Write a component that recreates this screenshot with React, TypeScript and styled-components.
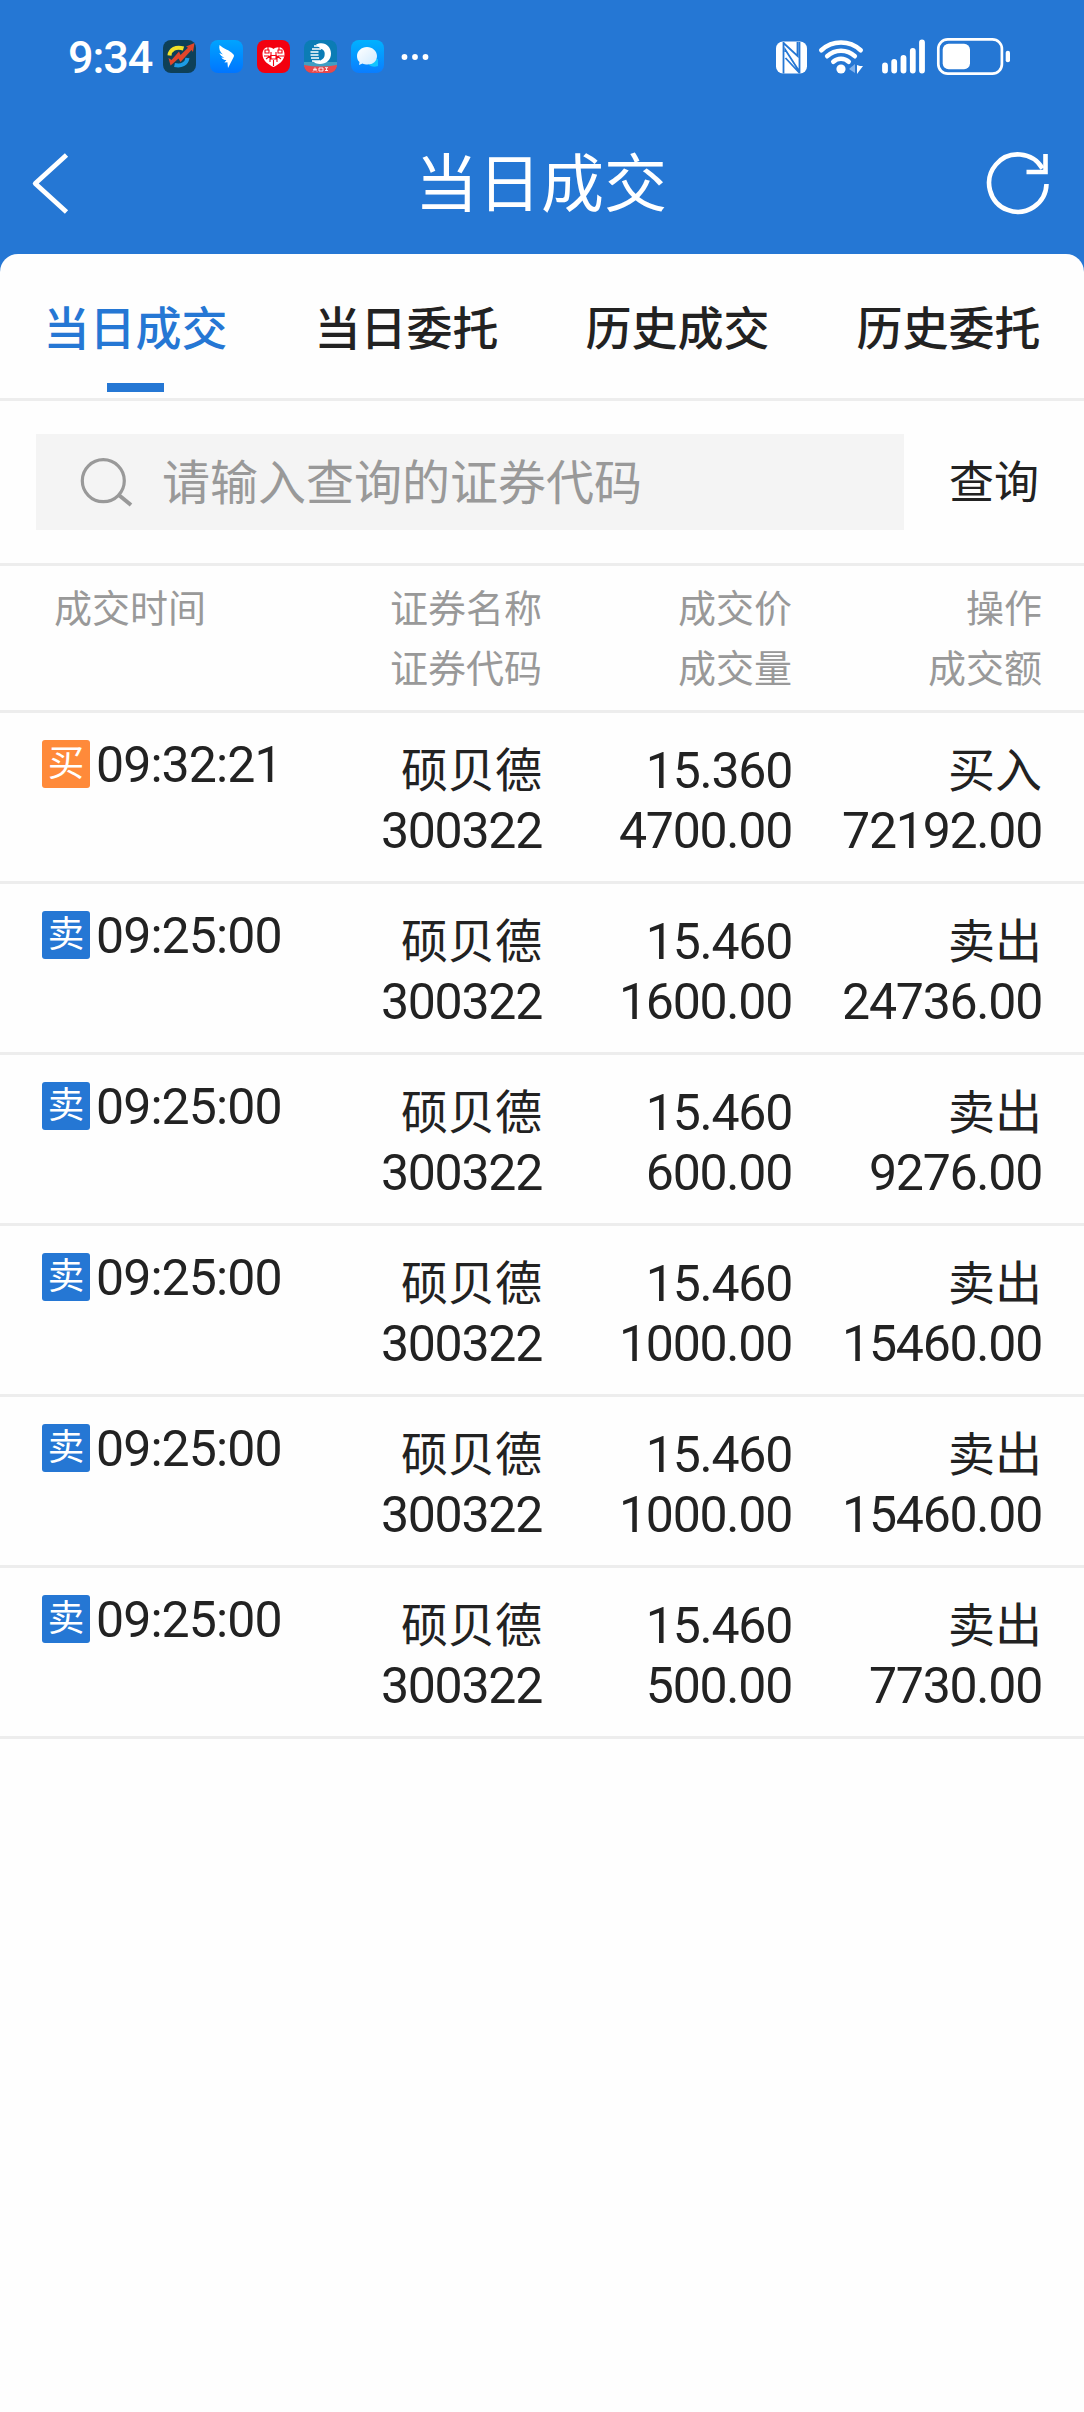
import React from "react";
import styled, { createGlobalStyle } from "styled-components";

const BLUE = "#2577d4";
const INK = "#222222";
const GRAY = "#999999";
const LINE = "#ededed";

const GlobalStyle = createGlobalStyle`
  * { box-sizing: border-box; }
  body {
    margin: 0;
    background: #fefefe;
    color: ${INK};
    font-family: Roboto, "Noto Sans CJK SC", sans-serif;
  }
  button, input { font: inherit; color: inherit; border: 0; background: none; padding: 0; margin: 0; }
  svg { display: block; flex: none; }
`;

const Screen = styled.div`
  width: 1084px;
  min-height: 2412px;
  display: flex;
  flex-direction: column;
  background: ${BLUE};
`;

const StatusBar = styled.div`
  height: 113px;
  padding: 0 73px 0 68px;
  display: flex;
  align-items: center;
  justify-content: space-between;
`;

const StatusGroup = styled.div`
  display: flex;
  align-items: center;
`;

const Clock = styled.span`
  width: 95px;
  padding-top: 2px;
  color: #fff;
  font-size: 45px;
  font-weight: 500;
  line-height: 60px;
  letter-spacing: -1.1px;
`;

const AppIcons = styled.div`
  display: flex;
  gap: 14px;
  margin-right: 17px;
`;

const NavBar = styled.header`
  height: 141px;
  padding: 0 33px 2px 31px;
  display: grid;
  grid-template-columns: 66px 1fr 66px;
  align-items: center;
`;

const NavButton = styled.button<{ $end?: boolean }>`
  display: flex;
  justify-content: ${(p) => (p.$end ? "flex-end" : "flex-start")};
`;

const Title = styled.h1`
  margin: 0;
  padding-top: 4px;
  color: #fff;
  font-size: 63px;
  font-weight: 400;
  line-height: 80px;
  text-align: center;
`;

const Sheet = styled.main`
  flex: 1;
  background: #fefefe;
  border-radius: 18px 18px 0 0;
`;

const Tabs = styled.nav`
  height: 147px;
  display: grid;
  grid-template-columns: repeat(4, 1fr);
  border-bottom: 3px solid ${LINE};
`;

const Tab = styled.button<{ $active?: boolean }>`
  display: flex;
  flex-direction: column;
  align-items: center;
  justify-content: space-between;
  padding: 40px 0 6px;
  font-size: 46px;
  font-weight: 500;
  line-height: 70px;
  color: ${(p) => (p.$active ? BLUE : INK)};
`;

const TabMark = styled.span`
  width: 57px;
  height: 9px;
  background: ${BLUE};
`;

const SearchBar = styled.div`
  height: 165px;
  padding-left: 36px;
  display: flex;
  align-items: center;
  border-bottom: 3px solid ${LINE};
`;

const SearchBox = styled.label`
  width: 868px;
  height: 96px;
  padding-left: 44px;
  display: flex;
  align-items: center;
  gap: 28px;
  background: #f4f4f4;
`;

const SearchInput = styled.input`
  flex: 1;
  height: 70px;
  padding-top: 2px;
  font-size: 48px;
  outline: none;
  &::placeholder { color: ${GRAY}; opacity: 1; }
`;

const SearchButton = styled.button`
  flex: 1;
  padding-top: 3px;
  font-size: 45px;
  line-height: 70px;
`;

const gridColumns = "292px 208px 250px 250px";

const HeadRow = styled.div`
  height: 147px;
  padding: 13px 42px 0;
  display: grid;
  grid-template-columns: ${gridColumns};
  border-bottom: 3px solid ${LINE};
  color: ${GRAY};
  font-size: 38px;
  line-height: 60px;
`;

const HeadCell = styled.div<{ $first?: boolean }>`
  display: flex;
  flex-direction: column;
  align-items: ${(p) => (p.$first ? "flex-start" : "flex-end")};
  padding-left: ${(p) => (p.$first ? "12px" : "0")};
`;

const Row = styled.div`
  height: 171px;
  padding: 27px 42px 0;
  display: grid;
  grid-template-columns: ${gridColumns};
  border-bottom: 3px solid ${LINE};
  line-height: 60px;
`;

const TimeCell = styled.div`
  height: 48px;
  display: flex;
  align-items: center;
  gap: 6px;
`;

const Badge = styled.span<{ $buy: boolean }>`
  width: 48px;
  height: 48px;
  border-radius: 3px;
  background: ${(p) => (p.$buy ? "#ff8a3a" : BLUE)};
  color: #fff;
  font-size: 36.5px;
  line-height: 48px;
  text-align: center;
`;

const Cell = styled.div`
  display: flex;
  flex-direction: column;
  align-items: flex-end;
  padding-top: 1px;
`;

const Numeric = styled.span`
  font-size: 50px;
  letter-spacing: -1.25px;
  white-space: nowrap;
`;

const Time = styled(Numeric)`
  padding-top: 2px;
  letter-spacing: -0.9px;
`;

const Name = styled.span`
  font-size: 47px;
  white-space: nowrap;
`;

const trades = [
  { buy: true, time: "09:32:21", price: "15.360", volume: "4700.00", amount: "72192.00" },
  { buy: false, time: "09:25:00", price: "15.460", volume: "1600.00", amount: "24736.00" },
  { buy: false, time: "09:25:00", price: "15.460", volume: "600.00", amount: "9276.00" },
  { buy: false, time: "09:25:00", price: "15.460", volume: "1000.00", amount: "15460.00" },
  { buy: false, time: "09:25:00", price: "15.460", volume: "1000.00", amount: "15460.00" },
  { buy: false, time: "09:25:00", price: "15.460", volume: "500.00", amount: "7730.00" },
];

const StockAppIcon = () => (
  <svg width="33" height="33" viewBox="0 0 33 33">
    <rect width="33" height="33" rx="8" fill="#0e4058" />
    <path d="M6.500 15.500C7 9.500 13 6 20.500 8.500" fill="none" stroke="#f2e229" strokeWidth="4" />
    <path d="M24.500 18c-1 6-6 8.500-13 7" fill="none" stroke="#1c9be6" strokeWidth="4" />
    <path d="M5.500 18l2 7.500 3-2.500 5-4.500 2 3.500L28.500 10l1.500 2 1.500-9-8.500 3.500 2 1.300-7.500 7.200-1.500-3.500L8.500 20z" fill="#e2452a" />
  </svg>
);

const WingAppIcon = () => (
  <svg width="33" height="33" viewBox="0 0 33 33">
    <defs>
      <linearGradient id="wing" x1="0" y1="0" x2="0" y2="1">
        <stop offset="0" stopColor="#00a4ff" />
        <stop offset="1" stopColor="#0075ff" />
      </linearGradient>
    </defs>
    <rect width="33" height="33" rx="8" fill="url(#wing)" />
    <path d="M9.500 5c4 4 9.500 4.500 14 9.500.8 1 .6 2-.2 3.200L18 28l-.6-5.800-3 .2 2-2.400c-2.500 0-4.300-1.200-5-2.600l3 .3c-2.700-1-4.200-2.600-5-4.600l3.500 1.400C10 12 8.600 8.500 9.500 5z" fill="#fff" />
  </svg>
);

const HeartAppIcon = () => (
  <svg width="33" height="33" viewBox="0 0 33 33">
    <rect width="33" height="33" rx="8" fill="#f3000f" />
    <path d="M16.500 27C12 25 5.500 21 5.500 14c0-8 8-8 11-5 3-3 11-3 11 5 0 7-6.500 11-11 13z" fill="#fff" />
    <path d="M8 10h4v3H8zM7 16h5M9 19l4-3v6M14 12v7h5v-7M14 15.500h5M21 10h4v3h-4zM21 16h6M24 19l-4-3v6M16.500 20v6M11 7v3M22 7v3" fill="none" stroke="#f3000f" strokeWidth="1.100" />
  </svg>
);

const FundAppIcon = () => (
  <svg width="33" height="33" viewBox="0 0 33 33">
    <defs>
      <clipPath id="fundClip"><rect width="33" height="33" rx="8" /></clipPath>
    </defs>
    <g clipPath="url(#fundClip)">
      <rect width="33" height="33" fill="#0b7cb5" />
      <path d="M0 22h33v5H0z" fill="#3f9fc4" />
      <path d="M12 4.500C20 .5 27 6 27 13.500c0 6.500-5 10.500-11 10.500-3 0-6-1-7-3 6 1 10.500-1 11.500-5 .8-4-.5-6.500-3.500-7z" fill="#fff" />
      <path d="M10 6h8M8 9h9M6.500 12h8M6.500 15h8M7 18h8M8 21h8" stroke="#fff" strokeWidth="1.600" />
      <path d="M0 25q16 3 33 0v8H0z" fill="#e9484c" />
      <path d="M9 29.300h4M11 27.500v2l-2 2M11 29.500l2 2M15 28h4v3h-4zM21 27.700h3M21 30.500h3M22.500 28v3" fill="none" stroke="#fff" strokeWidth=".9" />
    </g>
  </svg>
);

const ChatAppIcon = () => (
  <svg width="33" height="33" viewBox="0 0 33 33">
    <defs>
      <linearGradient id="chat" x1="0" y1="0" x2="0" y2="1">
        <stop offset="0" stopColor="#00b2ff" />
        <stop offset="1" stopColor="#0a7dff" />
      </linearGradient>
      <linearGradient id="bubble" x1="0" y1="0" x2="1" y2="1">
        <stop offset="0" stopColor="#ffffff" />
        <stop offset="1" stopColor="#cfeaff" />
      </linearGradient>
    </defs>
    <rect width="33" height="33" rx="8" fill="url(#chat)" />
    <path d="M18 19h9v7q-5 2-9-1z" fill="#12c4ff" />
    <path d="M16 7c5.500 0 10 4 10 9s-4 8.500-9.500 8.500c-2 0-3.500-.2-5-1L8 25l.5-3C6.500 20.500 6 18 6 16c0-5 4.500-9 10-9z" fill="url(#bubble)" />
  </svg>
);

const MoreDots = () => (
  <svg width="28" height="8" viewBox="0 0 28 8" fill="#fff">
    <circle cx="3.500" cy="4" r="2.900" />
    <circle cx="14" cy="4" r="2.900" />
    <circle cx="24.500" cy="4" r="2.900" />
  </svg>
);

const StatusIcons = () => (
  <svg width="236" height="40" viewBox="775 36 236 40">
    <rect x="776" y="40.500" width="31" height="32" rx="7" fill="#fff" />
    <path d="M783.500 42l14 13V41M783.500 41v31.500M785.500 51v-2l13.500 21M785.500 57l14 15M799.500 41v31.500" fill="none" stroke={BLUE} strokeWidth="1.800" />
    <g fill="none" stroke="#fff" strokeWidth="4.600" strokeLinecap="round">
      <path d="M821.300 49.200a29 29 0 0 1 39.400 0" />
      <path d="M827.200 55.200a20 20 0 0 1 27.600 0" />
      <path d="M833.300 60.700a11.500 11.500 0 0 1 15.400 0" />
    </g>
    <circle cx="841" cy="68" r="4.600" fill="#fff" />
    <path d="M855 63v9l-6-4z" fill="#7fb0ea" />
    <path d="M857 64v9l6-8h-3z" fill="#fff" />
    <g stroke="#fff" strokeWidth="5.800" strokeLinecap="round">
      <path d="M885 64.500v5M894.200 61v8.500M903.500 57v12.500M912.800 50v19.500M922 41.500v28" />
    </g>
    <rect x="938.300" y="38.300" width="63.600" height="34.400" rx="9.500" fill="none" stroke="#fff" strokeWidth="2.700" />
    <rect x="942.700" y="42.700" width="27.300" height="25.600" rx="6" fill="#fff" />
    <rect x="1005.700" y="49.700" width="4.300" height="11.600" rx="2.100" fill="#fff" />
  </svg>
);

const BackIcon = () => (
  <svg width="38" height="64" viewBox="31 150 38 64">
    <path d="M66.500 154L35.200 182.500l31.300 28.500" fill="none" stroke="#fff" strokeWidth="4.800" strokeLinejoin="round" />
  </svg>
);

const RefreshIcon = () => (
  <svg width="66" height="66" viewBox="985 150 66 66" fill="none" stroke="#fff" strokeWidth="4.600">
    <path d="M1046.500 184a28.700 28.700 0 1 1-4-15.500" />
    <path d="M1045.500 154v18h-19" />
  </svg>
);

const SearchIcon = () => (
  <svg width="54" height="52" viewBox="80 456 54 52" fill="none" stroke={GRAY} strokeWidth="3.200">
    <circle cx="103.300" cy="480.700" r="21" />
    <path d="M118.800 495L131 505" strokeWidth="4" />
  </svg>
);

export default function App() {
  return (
    <>
      <GlobalStyle />
      <Screen>
        <StatusBar>
          <StatusGroup>
            <Clock>9:34</Clock>
            <AppIcons>
              <StockAppIcon />
              <WingAppIcon />
              <HeartAppIcon />
              <FundAppIcon />
              <ChatAppIcon />
            </AppIcons>
            <MoreDots />
          </StatusGroup>
          <StatusIcons />
        </StatusBar>
        <NavBar>
          <NavButton aria-label="返回"><BackIcon /></NavButton>
          <Title>当日成交</Title>
          <NavButton $end aria-label="刷新"><RefreshIcon /></NavButton>
        </NavBar>
        <Sheet>
          <Tabs>
            {["当日成交", "当日委托", "历史成交", "历史委托"].map((label, i) => (
              <Tab key={label} $active={i === 0}>
                <span>{label}</span>
                {i === 0 && <TabMark />}
              </Tab>
            ))}
          </Tabs>
          <SearchBar>
            <SearchBox>
              <SearchIcon />
              <SearchInput placeholder="请输入查询的证券代码" />
            </SearchBox>
            <SearchButton>查询</SearchButton>
          </SearchBar>
          <HeadRow>
            <HeadCell $first><span>成交时间</span></HeadCell>
            <HeadCell><span>证券名称</span><span>证券代码</span></HeadCell>
            <HeadCell><span>成交价</span><span>成交量</span></HeadCell>
            <HeadCell><span>操作</span><span>成交额</span></HeadCell>
          </HeadRow>
          {trades.map((t, i) => (
            <Row key={i}>
              <TimeCell>
                <Badge $buy={t.buy}>{t.buy ? "买" : "卖"}</Badge>
                <Time>{t.time}</Time>
              </TimeCell>
              <Cell><Name>硕贝德</Name><Numeric>300322</Numeric></Cell>
              <Cell><Numeric>{t.price}</Numeric><Numeric>{t.volume}</Numeric></Cell>
              <Cell><Name>{t.buy ? "买入" : "卖出"}</Name><Numeric>{t.amount}</Numeric></Cell>
            </Row>
          ))}
        </Sheet>
      </Screen>
    </>
  );
}
